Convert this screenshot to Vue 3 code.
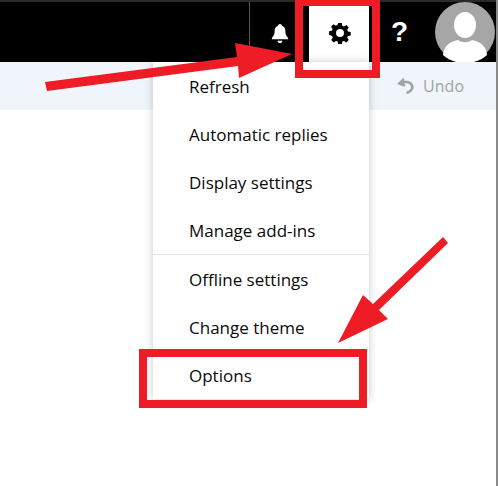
<template>
  <div class="page">
    <header class="topbar">
      <div class="top-actions">
        <span class="sep"></span>
        <button class="top-btn bell-btn">
          <svg width="18" height="21" viewBox="0 0 18 22">
            <path d="M9 1c1.200 0 2 .8 2 1.800 2.600.8 3.600 3 3.600 5.600 0 3.600 1 5.400 2.900 7.300v1.300H.5v-1.300c1.900-1.900 2.900-3.700 2.900-7.300 0-2.600 1-4.800 3.600-5.600C7 1.800 7.800 1 9 1z" fill="#fff" />
            <path d="M6.500 18.500h5c0 1.500-1.100 2.500-2.500 2.500s-2.500-1-2.500-2.500z" fill="#fff" />
          </svg>
        </button>
        <button class="top-btn gear-btn">
          <svg width="22" height="22" viewBox="0 0 22 22">
            <path fill="#000" fill-rule="evenodd" d="M9.200 1h3.600l.5 2.800 1.700.7 2.300-1.600 2.500 2.500-1.600 2.300.7 1.700 2.800.5v3.600l-2.800.5-.7 1.700 1.600 2.300-2.500 2.500-2.300-1.600-1.700.7-.5 2.800H9.200l-.5-2.800-1.700-.7-2.300 1.600-2.500-2.500 1.600-2.300-.7-1.700L.1 12.800V9.200l2.800-.5.7-1.700L2 4.700l2.500-2.500L6.800 3.800l1.700-.7zM11 7a4 4 0 1 0 0 8 4 4 0 0 0 0-8z" />
          </svg>
        </button>
        <button class="top-btn help-btn">?</button>
        <div class="avatar">
          <svg width="64" height="60" viewBox="0 0 64 60">
            <circle cx="31" cy="30" r="30" fill="#a6a6a6" />
            <ellipse cx="31" cy="23" rx="11" ry="13" fill="#fff" />
            <path d="M9 53c1-10 7-13 15-15 4 3 10 3 14 0 8 2 14 5 15 15-5 5-13 8-22 8s-17-3-22-8z" fill="#fff" />
          </svg>
        </div>
      </div>
    </header>

    <div class="toolbar">
      <span class="undo">
        <svg width="18" height="18" viewBox="0 0 18 18">
          <path d="M7 2 2.500 6.500 8 8.500M3 6.500c4.500-2.500 10.500-2 12 2 1.200 3.400-1.500 6-5.500 7.500" fill="none" stroke="#a2a2a2" stroke-width="2.600" />
        </svg>
        Undo
      </span>
    </div>

    <div class="menu">
      <div v-for="(group, i) in menuGroups" :key="i" class="menu-group">
        <div v-for="item in group" :key="item" class="menu-item">{{ item }}</div>
      </div>
    </div>

    <!-- red marks drawn on top of the screenshot -->
    <div class="mark mark-gear"></div>
    <div class="mark mark-options"></div>
    <svg class="arrows" width="498" height="486" viewBox="0 0 498 486">
      <polygon fill="#ee1c25" points="45,82 237,57 235,43 292,54 239,78 238,66 47,91" />
      <polygon fill="#ee1c25" points="443,237 448,243 379,310 388,319 338,343 363,295 373,304" />
    </svg>
    <div class="edge"></div>
  </div>
</template>

<script setup>
const menuGroups = [
  ['Refresh', 'Automatic replies', 'Display settings', 'Manage add-ins'],
  ['Offline settings', 'Change theme', 'Options']
]
</script>

<style>
html, body {
  background: #fff;
}
</style>

<style scoped>
.page {
  position: relative;
  width: 498px;
  height: 486px;
  overflow: hidden;
  background: #fff;
  font-family: "Open Sans", "Noto Sans", sans-serif;
}

.topbar {
  height: 60px;
  background: #000;
  border-top: 2px solid #2a2a2a;
  display: flex;
  justify-content: flex-end;
}

.top-actions {
  display: flex;
  align-items: stretch;
}

.sep {
  width: 1px;
  height: 44px;
  background: #555;
}

.top-btn {
  border: none;
  padding: 0;
  background: none;
  display: flex;
  align-items: center;
  justify-content: center;
  height: 60px;
}

.bell-btn {
  width: 59px;
}

.bell-btn svg {
  margin-top: 2px;
}

.gear-btn {
  width: 60px;
  background: #fff;
}

.gear-btn svg {
  margin-top: 1px;
  margin-left: 2px;
}

.help-btn {
  width: 61px;
  color: #fff;
  font-family: "Liberation Sans", sans-serif;
  font-weight: 700;
  font-size: 28px;
  line-height: 1;
}

.avatar {
  width: 64px;
  margin-left: 4px;
}

.toolbar {
  height: 48px;
  background: #eff5fb;
  display: flex;
  justify-content: flex-end;
  align-items: center;
  padding-right: 34px;
}

.undo {
  display: flex;
  align-items: center;
  gap: 8px;
  color: #a2a2a2;
  font-size: 16px;
}

.menu {
  position: absolute;
  left: 153px;
  top: 62px;
  width: 216px;
  background: #fff;
  box-shadow: 0 0 8px rgba(0, 0, 0, 0.22);
}

.menu-group + .menu-group {
  border-top: 1px solid #e6e6e6;
}

.menu-item {
  height: 48px;
  line-height: 50px;
  padding-left: 36px;
  color: #0a0a0a;
  font-size: 17px;
}

.mark {
  position: absolute;
  border: 8px solid #ee1c25;
}

.mark-gear {
  left: 295px;
  top: -2px;
  width: 69px;
  height: 64px;
}

.mark-options {
  left: 139px;
  top: 349px;
  width: 212px;
  height: 43px;
}

.arrows {
  position: absolute;
  left: 0;
  top: 0;
}

.edge {
  position: absolute;
  right: 0;
  top: 0;
  width: 2px;
  height: 100%;
  background: #8a8a8a;
}
</style>
